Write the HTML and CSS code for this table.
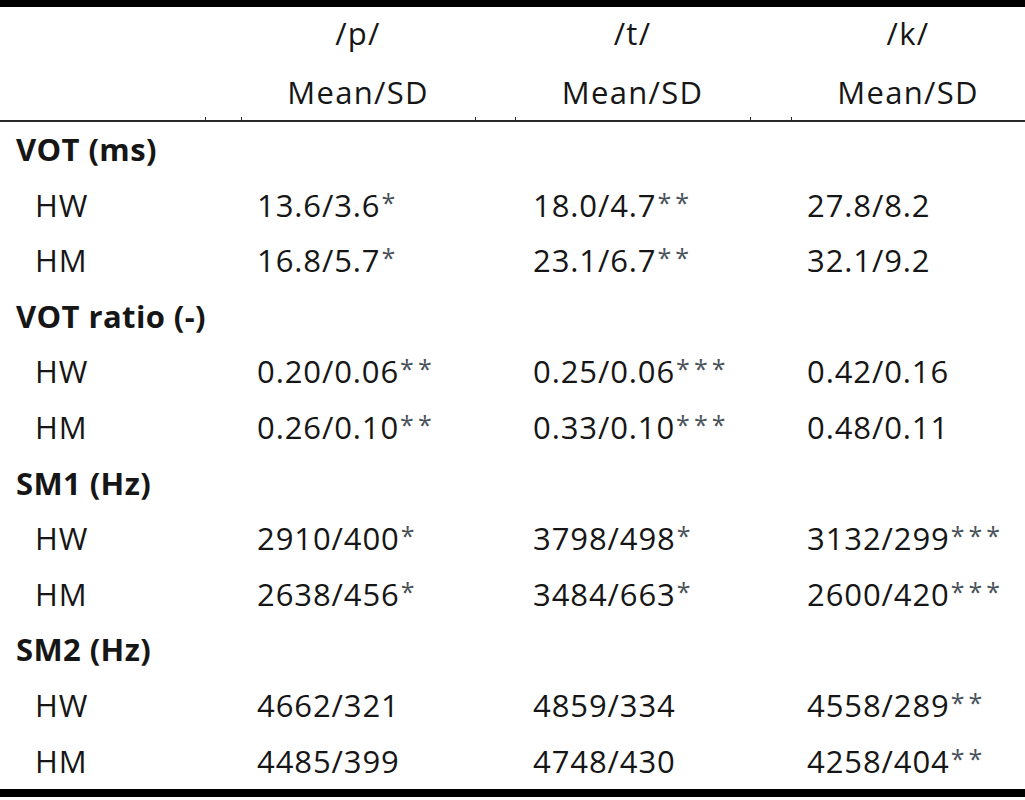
FILE: index.html
```html
<!DOCTYPE html>
<html>
<head>
<meta charset="utf-8">
<link rel="stylesheet" href="styles.css">
</head>
<body>
<table class="stats">
  <colgroup>
    <col class="c-label"><col class="c-gap1"><col class="c-p"><col class="c-gap2"><col class="c-t"><col class="c-gap3"><col class="c-k">
  </colgroup>
  <thead>
    <tr class="hd hd-top">
      <th></th><th></th><th>/p/</th><th></th><th>/t/</th><th></th><th>/k/</th>
    </tr>
    <tr class="hd hd-bottom">
      <th></th><th></th><th>Mean/SD</th><th></th><th>Mean/SD</th><th></th><th>Mean/SD</th>
    </tr>
  </thead>
  <tbody>
    <tr class="grp"><td colspan="7">VOT (ms)</td></tr>
    <tr><td class="sub">HW</td><td></td><td>13.6/3.6<span class="sig">*</span></td><td></td><td>18.0/4.7<span class="sig">**</span></td><td></td><td>27.8/8.2</td></tr>
    <tr><td class="sub">HM</td><td></td><td>16.8/5.7<span class="sig">*</span></td><td></td><td>23.1/6.7<span class="sig">**</span></td><td></td><td>32.1/9.2</td></tr>
    <tr class="grp"><td colspan="7">VOT ratio (-)</td></tr>
    <tr><td class="sub">HW</td><td></td><td>0.20/0.06<span class="sig">**</span></td><td></td><td>0.25/0.06<span class="sig">***</span></td><td></td><td>0.42/0.16</td></tr>
    <tr><td class="sub">HM</td><td></td><td>0.26/0.10<span class="sig">**</span></td><td></td><td>0.33/0.10<span class="sig">***</span></td><td></td><td>0.48/0.11</td></tr>
    <tr class="grp"><td colspan="7">SM1 (Hz)</td></tr>
    <tr><td class="sub">HW</td><td></td><td>2910/400<span class="sig">*</span></td><td></td><td>3798/498<span class="sig">*</span></td><td></td><td>3132/299<span class="sig">***</span></td></tr>
    <tr><td class="sub">HM</td><td></td><td>2638/456<span class="sig">*</span></td><td></td><td>3484/663<span class="sig">*</span></td><td></td><td>2600/420<span class="sig">***</span></td></tr>
    <tr class="grp"><td colspan="7">SM2 (Hz)</td></tr>
    <tr><td class="sub">HW</td><td></td><td>4662/321</td><td></td><td>4859/334</td><td></td><td>4558/289<span class="sig">**</span></td></tr>
    <tr class="last"><td class="sub">HM</td><td></td><td>4485/399</td><td></td><td>4748/430</td><td></td><td>4258/404<span class="sig">**</span></td></tr>
  </tbody>
</table>
</body>
</html>
```

FILE: styles.css
```css
html, body {
  margin: 0;
  padding: 0;
  background: #ffffff;
}

.stats {
  width: 1025px;
  border-collapse: collapse;
  table-layout: fixed;
  font-family: "Open Sans", "Noto Sans", sans-serif;
  font-size: 31px;
  letter-spacing: 0.9px;
  color: #161616;
  border-top: 7px solid #000;
  border-bottom: 8px solid #000;
}

.c-label { width: 205px; }
.c-gap1 { width: 36px; }
.c-p { width: 234px; }
.c-gap2 { width: 40px; }
.c-t { width: 235px; }
.c-gap3 { width: 41px; }
.c-k { width: 234px; }

.stats th,
.stats td {
  padding: 0;
  white-space: nowrap;
  overflow: visible;
}

.hd th {
  font-weight: normal;
  text-align: center;
  height: 56.5px;
  line-height: 56.5px;
  vertical-align: middle;
  letter-spacing: 1.3px;
}

.hd-top th {
  line-height: 52px;
  vertical-align: top;
}

.hd-bottom th {
  border-bottom: 2px solid #2a2a2a;
  background: linear-gradient(#2a2a2a, #2a2a2a) left bottom / 1px 3px no-repeat;
}

.hd-bottom th:first-child {
  background: none;
}

.stats tbody td {
  height: 55.6px;
  line-height: 55.6px;
  padding-left: 16px;
  text-align: left;
  vertical-align: middle;
}

.stats tbody td:nth-child(5) {
  padding-left: 18px;
}

.grp td {
  font-weight: bold;
  padding-left: 18px;
  letter-spacing: 0.4px;
}

.stats tbody td.sub {
  padding-left: 35px;
}

.sig {
  font-size: 25px;
  letter-spacing: 4px;
  color: #4a525a;
  vertical-align: 5px;
  line-height: 1;
  padding-left: 1px;
}
```
